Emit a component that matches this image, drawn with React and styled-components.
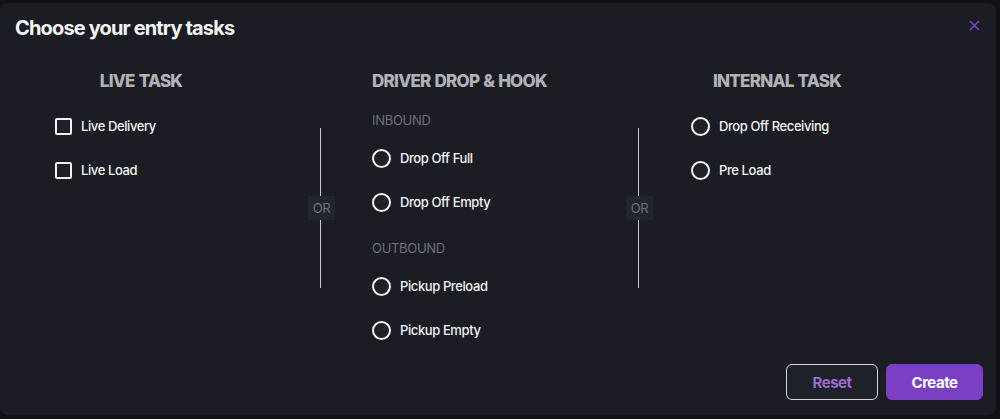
import React, { useState } from "react";
import styled, { createGlobalStyle } from "styled-components";

const GlobalStyle = createGlobalStyle`
  * { box-sizing: border-box; }
  html, body { margin: 0; padding: 0; background: #111116; }
  body { font-family: Inter, "Liberation Sans", Arial, sans-serif; }
`;

const Page = styled.div`
  height: 419px;
  padding: 3px 4px 4px 0;
  background: #111116;
`;

const Modal = styled.div`
  height: 412px;
  background: #1c1d24;
  border-radius: 8px;
  display: flex;
  flex-direction: column;
`;

const Header = styled.div`
  display: flex;
  align-items: center;
  justify-content: space-between;
  padding: 13px 16px 0 15px;
`;

const Title = styled.h2`
  margin: 0;
  font-size: 20px;
  line-height: 24px;
  font-weight: 700;
  letter-spacing: -0.85px;
  color: #f4f4f5;
`;

const Close = styled.button`
  border: 0;
  background: none;
  padding: 0;
  width: 11px;
  height: 11px;
  margin-top: -5px;
  display: flex;
  cursor: pointer;
`;

const Body = styled.div`
  display: flex;
  align-items: flex-start;
  padding: 31px 0 0 55px;
`;

const Column = styled.div`
  width: 172px;
  display: flex;
  flex-direction: column;
`;

const ColTitle = styled.div`
  text-align: center;
  font-size: 17px;
  line-height: 20px;
  font-weight: 800;
  letter-spacing: -0.75px;
  word-spacing: 1px;
  color: #b2b2b6;
  margin-bottom: 13px;
  white-space: nowrap;
`;

const Group = styled.div`
  font-size: 13px;
  line-height: 16px;
  color: #6c6f79;
  letter-spacing: -0.3px;
  margin: 8px 0;
`;

const Row = styled.label`
  height: 44px;
  display: flex;
  align-items: center;
  gap: 9px;
  font-size: 13px;
  font-weight: 500;
  letter-spacing: -0.4px;
  color: #f2f2f3;
  white-space: nowrap;
  cursor: pointer;

  & + ${Group} {
    margin-top: 16px;
  }
`;

const Box = styled.span`
  width: 17px;
  height: 17px;
  flex: none;
  border: 2px solid #f2f2f3;
  border-radius: ${(p) => (p.$round ? "50%" : "2px")};
  background: ${(p) => (p.$on ? "#7b3fc4" : "#1f2128")};
  ${(p) => p.$round && "width: 19px; height: 19px;"}
`;

const Divider = styled.div`
  width: 27px;
  margin: 57px ${(p) => p.$right}px 0 ${(p) => p.$left}px;
  display: flex;
  flex-direction: column;
  align-items: flex-start;
`;

const Line = styled.div`
  width: 1px;
  height: 68px;
  margin-left: 12px;
  background: #c9c9cc;
`;

const Or = styled.div`
  width: 27px;
  height: 24px;
  display: flex;
  align-items: center;
  justify-content: center;
  background: #23252c;
  color: #6c6f79;
  font-size: 13px;
  letter-spacing: -0.3px;
`;

const Footer = styled.div`
  margin-top: auto;
  display: flex;
  justify-content: flex-end;
  gap: 8px;
  padding: 0 13px 15px 0;
`;

const Button = styled.button`
  height: 36px;
  width: ${(p) => p.$w}px;
  border-radius: 6px;
  font-family: inherit;
  font-size: 15px;
  font-weight: 700;
  letter-spacing: -0.5px;
  cursor: pointer;
  border: 1px solid ${(p) => (p.$primary ? "#7b3fc4" : "#d6d6d8")};
  background: ${(p) => (p.$primary ? "#7b3fc4" : "#1f2128")};
  color: ${(p) => (p.$primary ? "#ffffff" : "#9a6ccf")};
`;

const Option = ({ label, round, on, onClick }) => (
  <Row onClick={onClick}>
    <Box $round={round} $on={on} />
    {label}
  </Row>
);

export default function App() {
  const [picked, setPicked] = useState({});
  const toggle = (k) => setPicked({ ...picked, [k]: !picked[k] });

  return (
    <>
      <GlobalStyle />
      <Page>
        <Modal>
          <Header>
            <Title>Choose your entry tasks</Title>
            <Close aria-label="close">
              <svg width="11" height="11" viewBox="0 0 11 11">
                <path d="M1 1L10 10M10 1L1 10" stroke="#7b45c8" strokeWidth="1.5" />
              </svg>
            </Close>
          </Header>
          <Body>
            <Column>
              <ColTitle>LIVE TASK</ColTitle>
              <Option label="Live Delivery" on={picked.ld} onClick={() => toggle("ld")} />
              <Option label="Live Load" on={picked.ll} onClick={() => toggle("ll")} />
            </Column>
            <Divider $left={81} $right={37}>
              <Line />
              <Or>OR</Or>
              <Line />
            </Divider>
            <Column>
              <ColTitle>DRIVER DROP &amp; HOOK</ColTitle>
              <Group>INBOUND</Group>
              <Option round label="Drop Off Full" />
              <Option round label="Drop Off Empty" />
              <Group>OUTBOUND</Group>
              <Option round label="Pickup Preload" />
              <Option round label="Pickup Empty" />
            </Column>
            <Divider $left={82} $right={38}>
              <Line />
              <Or>OR</Or>
              <Line />
            </Divider>
            <Column>
              <ColTitle>INTERNAL TASK</ColTitle>
              <Option round label="Drop Off Receiving" />
              <Option round label="Pre Load" />
            </Column>
          </Body>
          <Footer>
            <Button $w={92}>Reset</Button>
            <Button $w={97} $primary>
              Create
            </Button>
          </Footer>
        </Modal>
      </Page>
    </>
  );
}
